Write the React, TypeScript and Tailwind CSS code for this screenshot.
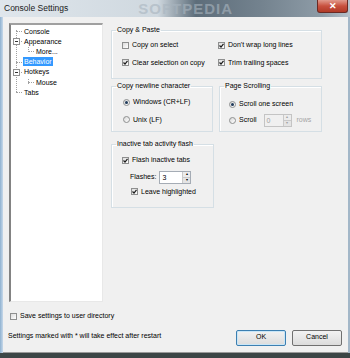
import React from "react"

const font = { fontFamily: '"Liberation Sans", Arial, sans-serif' }

function Check({ on }: { on?: boolean }) {
  return (
    <span className="flex h-[7px] w-[7px] shrink-0 items-center justify-center border border-[#8e8f8f] bg-gradient-to-br from-[#dcdcdc] to-white">
      {on && (
        <svg width="5" height="5" viewBox="0 0 5 5">
          <path d="M0.5 2.5 L2 4 L4.5 0.8" stroke="#1b1b1b" strokeWidth="1.2" fill="none" />
        </svg>
      )}
    </span>
  )
}

function Radio({ on }: { on?: boolean }) {
  return (
    <span className="flex h-[7px] w-[7px] shrink-0 items-center justify-center rounded-full border border-[#8e8f8f] bg-gradient-to-br from-[#d8d8d8] to-white">
      {on && <span className="h-[3px] w-[3px] rounded-full bg-[#1f3a5a]" />}
    </span>
  )
}

function Spin({ value, disabled, w }: { value: string; disabled?: boolean; w: string }) {
  return (
    <div className={`flex h-[13px] ${w} items-stretch border ${disabled ? "border-[#c4c4c4] bg-[#f0f0f0] text-[#a0a0a0]" : "border-[#a5acb5] bg-white text-black"}`}>
      <span className="flex-1 pl-[2px] leading-[11px]">{value}</span>
      <div className="flex w-[8px] flex-col border-l border-[#c9c9c9]">
        <span className="flex flex-1 items-center justify-center border-b border-[#c9c9c9] bg-[#ececec] text-[4px] leading-none">▴</span>
        <span className="flex flex-1 items-center justify-center bg-[#e4e4e4] text-[4px] leading-none">▾</span>
      </div>
    </div>
  )
}

function Group({ title, className, children }: { title: string; className: string; children: React.ReactNode }) {
  return (
    <fieldset className={`border border-[#d5dfe5] shadow-[inset_1px_1px_0_#fff] ${className}`}>
      <legend className="ml-[4px] px-[1px] leading-[8px]">{title}</legend>
      {children}
    </fieldset>
  )
}

export default function App() {
  const tree = [
    { label: "Console", indent: 0 },
    { label: "Appearance", indent: 0, box: true },
    { label: "More...", indent: 1 },
    { label: "Behavior", indent: 0, selected: true },
    { label: "Hotkeys", indent: 0, box: true },
    { label: "Mouse", indent: 1 },
    { label: "Tabs", indent: 0 },
  ]

  return (
    <div className="flex h-[358px] w-[350px] flex-col overflow-hidden bg-[#3c4646] text-[7px] text-black" style={font}>
      {/* title bar */}
      <div className="flex h-[17px] shrink-0 items-start bg-[linear-gradient(to_right,#dfe6ec_0%,#cfd8df_45%,#5d6d7a_56%,#74838f_75%,#8e9ca7_92%,#b6c2cc_100%)]">
        <span className="pl-[4px] pt-[3px] text-[8.5px] leading-[10px] text-[#1a1a1a]">Console Settings</span>
        <div className="relative flex-1">
          <span className="absolute left-[70px] top-[-2px] text-[15px] font-bold tracking-[1px] text-[#a9b5bf] opacity-60">SOFTPEDIA</span>
        </div>
        <div className="mr-[2px] flex h-[13px] w-[31px] items-center justify-center rounded-b-[3px] border border-t-0 border-[#6b2a24] bg-gradient-to-b from-[#e09a8d] via-[#c8503e] to-[#b03a27] text-[9px] font-bold leading-none text-white">
          ✕
        </div>
      </div>

      <div className="flex h-[336px] shrink-0">
        <div className="w-[3px] bg-gradient-to-r from-[#8fb1d0] to-[#c7d9ea]" />
        <div className="flex flex-1 flex-col border-b border-[#9a9a9a] bg-[#f0f0f0]">
          <div className="flex pl-[6px] pt-[6px]">
            {/* tree */}
            <div className="relative h-[279px] w-[94px] border-l-2 border-t-2 border-b border-r border-l-[#838383] border-t-[#a0a0a0] border-b-[#e8e8e8] border-r-[#e8e8e8] bg-white pt-[1px]">
              <div className="absolute left-[5px] top-[5px] h-[62px] border-l border-dotted border-[#a0a0a0]" />
              <div className="absolute left-[17px] top-[22px] h-[5px] border-l border-dotted border-[#a0a0a0]" />
              <div className="absolute left-[17px] top-[54px] h-[5px] border-l border-dotted border-[#a0a0a0]" />
              {tree.map((t) => (
                <div key={t.label} className="relative flex h-[10.2px] items-center" style={{ paddingLeft: t.indent ? 24 : 12 }}>
                  <span
                    className="absolute top-1/2 border-t border-dotted border-[#a0a0a0]"
                    style={{ left: t.indent ? 17 : 5, width: 6 }}
                  />
                  {t.box && (
                    <span className="absolute left-[2px] top-[2px] flex h-[7px] w-[7px] items-center justify-center border border-[#919191] bg-white">
                      <span className="h-px w-[3px] bg-[#333]" />
                    </span>
                  )}
                  <span className={`relative px-[1px] leading-[9px] ${t.selected ? "bg-[#3399ff] text-white" : ""}`}>{t.label}</span>
                </div>
              ))}
            </div>

            {/* right panel */}
            <div className="ml-[8px] flex flex-col pt-[3px]">
              <Group title="Copy & Paste" className="h-[53px] w-[211px]">
                <div className="grid grid-cols-[96px_1fr] gap-y-[7px] pl-[10px] pt-[6px]">
                  <label className="flex items-center gap-[3px]"><Check />Copy on select</label>
                  <label className="flex items-center gap-[3px]"><Check on />Don't wrap long lines</label>
                  <label className="flex items-center gap-[3px]"><Check on />Clear selection on copy</label>
                  <label className="flex items-center gap-[3px]"><Check on />Trim trailing spaces</label>
                </div>
              </Group>

              <div className="mt-[3px] flex gap-[6px]">
                <Group title="Copy newline character" className="h-[50px] w-[102px]">
                  <div className="flex flex-col gap-[7px] pl-[11px] pt-[7px]">
                    <label className="flex items-center gap-[3px]"><Radio on />Windows (CR+LF)</label>
                    <label className="flex items-center gap-[3px]"><Radio />Unix (LF)</label>
                  </div>
                </Group>
                <Group title="Page Scrolling" className="h-[50px] w-[103px]">
                  <div className="flex flex-col gap-[4px] pl-[9px] pt-[9px]">
                    <label className="flex items-center gap-[3px]"><Radio on />Scroll one screen</label>
                    <div className="flex items-center gap-[3px]">
                      <Radio />Scroll
                      <span className="ml-[4px]"><Spin value="0" disabled w="w-[28px]" /></span>
                      <span className="ml-[2px] text-[#a5a5a5]">rows</span>
                    </div>
                  </div>
                </Group>
              </div>

              <Group title="Inactive tab activity flash" className="mt-[8px] h-[68px] w-[103px]">
                <div className="flex flex-col pl-[10px] pt-[7px]">
                  <label className="flex items-center gap-[3px]"><Check on />Flash inactive tabs</label>
                  <div className="mt-[5px] flex items-center gap-[3px] pl-[8px]">
                    Flashes:
                    <Spin value="3" w="w-[32px]" />
                  </div>
                  <label className="mt-[3px] flex items-center gap-[3px] pl-[9px]"><Check on />Leave highlighted</label>
                </div>
              </Group>
            </div>
          </div>

          {/* bottom */}
          <label className="ml-[7px] mt-[9px] flex items-center gap-[3px]"><Check />Save settings to user directory</label>
          <div className="mt-[8px] flex items-start pl-[5px] pr-[6px]">
            <span className="mt-[1px] flex-1">Settings marked with * will take effect after restart</span>
            <button className="h-[16px] w-[50px] rounded-[2px] border border-[#3c7fb1] bg-gradient-to-b from-[#f2f2f2] to-[#dcdcdc] shadow-[inset_0_0_0_1px_#c9e6f7]">OK</button>
            <button className="ml-[6px] h-[16px] w-[50px] rounded-[2px] border border-[#707070] bg-gradient-to-b from-[#f2f2f2] to-[#dcdcdc]">Cancel</button>
          </div>
        </div>
        <div className="w-[2px] bg-[#a3b7c8]" />
      </div>
    </div>
  )
}
